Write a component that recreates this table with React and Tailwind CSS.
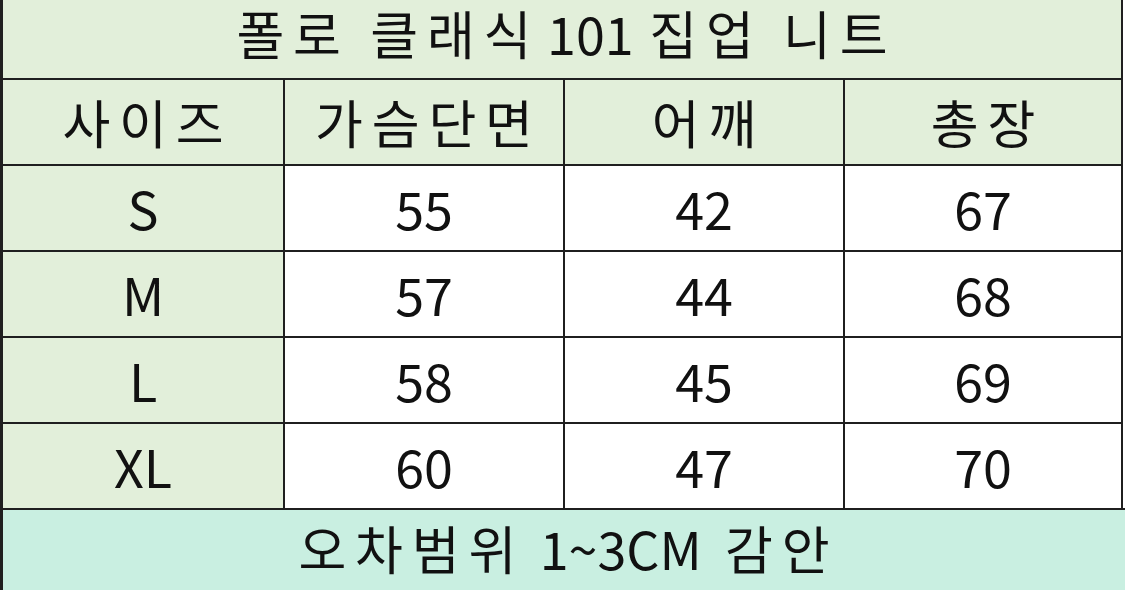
const rows = [
  ['S', '55', '42', '67'],
  ['M', '57', '44', '68'],
  ['L', '58', '45', '69'],
  ['XL', '60', '47', '70'],
];

const headers = ['사이즈', '가슴단면', '어깨', '총장'];

const font = { fontFamily: '"Noto Sans CJK KR", "Noto Sans", sans-serif' };

// Korean text in the source is set wider than Noto, so space it out a bit
const K = ({ children }) => <span className="tracking-[0.17em] mr-[-0.17em]">{children}</span>;

const Cell = ({ children, first, green }) => (
  <div
    className={`flex items-center justify-center text-[52px] text-[#111] leading-[1.3] ${
      first ? '' : 'border-l-2 border-[#1f1f1f]'
    } ${green ? 'bg-[#e2efda]' : 'bg-white'}`}
  >
    {children}
  </div>
);

export default function App() {
  return (
    <div className="w-[1125px] h-[590px] bg-white flex flex-col overflow-hidden" style={font}>
      <div className="w-[1123px] border-l-[3px] border-r-2 border-[#1f1f1f]">
        {/* title */}
        <div className="h-[78px] bg-[#e2efda] flex items-center justify-center text-[52px] text-[#111] leading-[1.1] pb-[12px]">
          <K>폴로 클래식</K>
          <span className="mx-[0.3em]">101</span>
          <K>집업 니트</K>
        </div>

        {/* header */}
        <div className="grid grid-cols-[280px_280px_280px_278px] h-[86px] border-t-2 border-[#1f1f1f]">
          {headers.map((h, i) => (
            <Cell key={h} first={i === 0} green>
              <K>{h}</K>
            </Cell>
          ))}
        </div>

        {rows.map((r) => (
          <div
            key={r[0]}
            className="grid grid-cols-[280px_280px_280px_278px] h-[86px] border-t-2 border-[#1f1f1f]"
          >
            {r.map((v, i) => (
              <Cell key={i} first={i === 0} green={i === 0}>
                {v}
              </Cell>
            ))}
          </div>
        ))}
      </div>

      {/* footer */}
      <div className="flex-1 bg-[#c9efe1] border-t-2 border-l-[3px] border-[#1f1f1f] flex items-center justify-center text-[52px] text-[#111] leading-[1.3] pb-1">
        <K>오차범위</K>
        <span className="mx-[0.45em]">1~3CM</span>
        <K>감안</K>
      </div>
    </div>
  );
}
